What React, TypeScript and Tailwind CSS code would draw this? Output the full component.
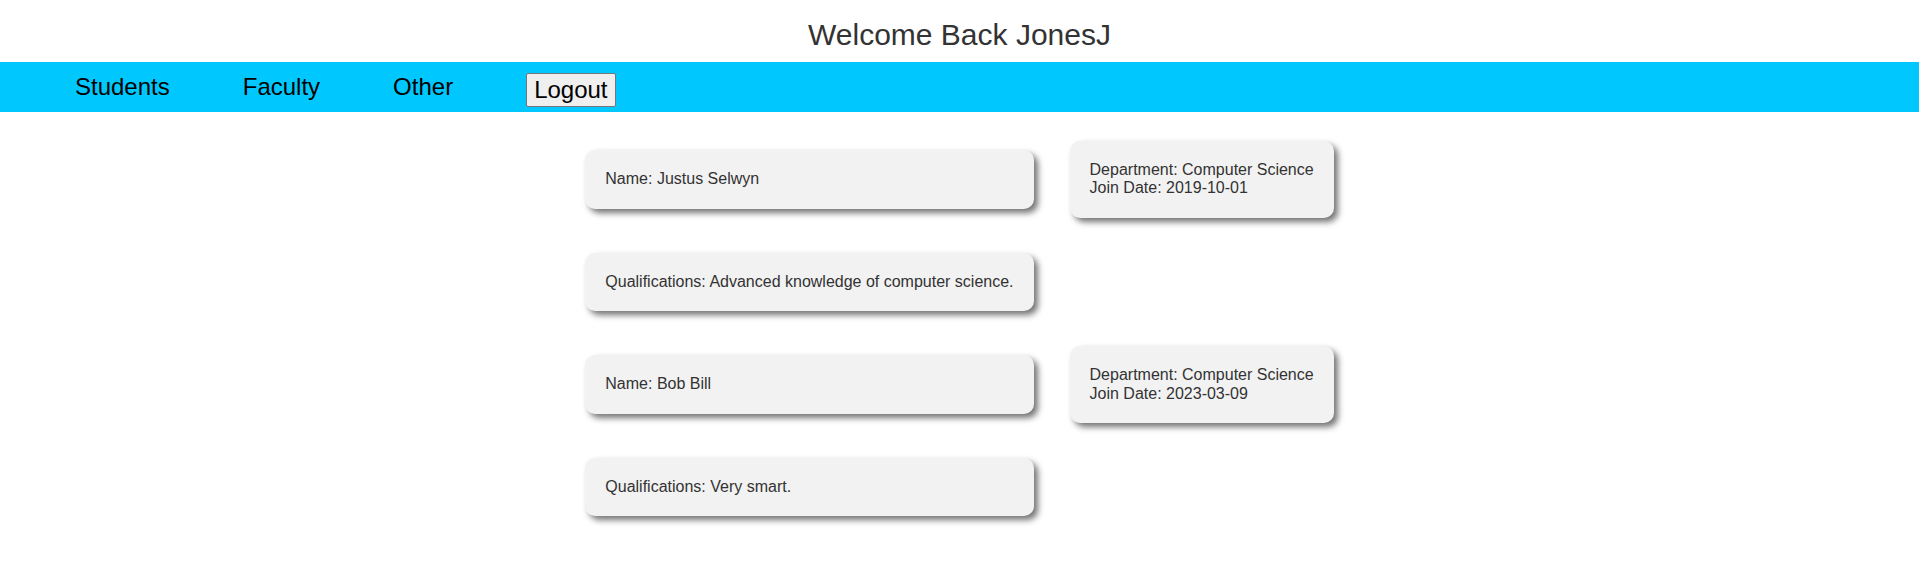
interface Faculty {
  name: string;
  department: string;
  joinDate: string;
  qualifications: string;
}

const faculty: Faculty[] = [
  {
    name: "Justus Selwyn",
    department: "Computer Science",
    joinDate: "2019-10-01",
    qualifications: "Advanced knowledge of computer science.",
  },
  {
    name: "Bob Bill",
    department: "Computer Science",
    joinDate: "2023-03-09",
    qualifications: "Very smart.",
  },
];

function Card({ children, fit }: { children: React.ReactNode; fit?: boolean }) {
  return (
    <div
      className={
        "bg-[#f2f2f2] rounded-[10px] p-[20px] text-[16px] leading-[18.4px] text-[#333] shadow-[4px_4px_6px_rgba(0,0,0,0.55)] " +
        (fit ? "justify-self-start" : "")
      }
    >
      {children}
    </div>
  );
}

function App() {
  return (
    <div className="min-h-screen bg-white font-['Liberation_Sans',Arial,sans-serif]">
      <div className="h-[62px] pt-[18px] text-center text-[30px] leading-[34px] text-[#333]">
        Welcome Back JonesJ
      </div>

      <nav className="h-[50px] bg-[#00c8ff] flex items-center pl-[75px] gap-[73px] text-[24px] leading-[27.6px] text-black">
        <a href="#">Students</a>
        <a href="#">Faculty</a>
        <a href="#">Other</a>
        <button className="mt-[6px] bg-[#efefef] border border-[#767676] rounded-[2px] px-[7px] py-[2px] text-[24px] leading-[27.6px] text-black">
          Logout
        </button>
      </nav>

      <div className="grid grid-cols-[auto_auto] justify-center items-center gap-x-[36px] gap-y-[35px] mt-[29px]">
        {faculty.map((f) => (
          <>
            <Card key={f.name + "-name"}>Name: {f.name}</Card>
            <Card key={f.name + "-dept"} fit>
              Department: {f.department}
              <br />
              Join Date: {f.joinDate}
            </Card>
            <Card key={f.name + "-qual"}>Qualifications: {f.qualifications}</Card>
            <div key={f.name + "-empty"} />
          </>
        ))}
      </div>
    </div>
  );
}

export default App;
